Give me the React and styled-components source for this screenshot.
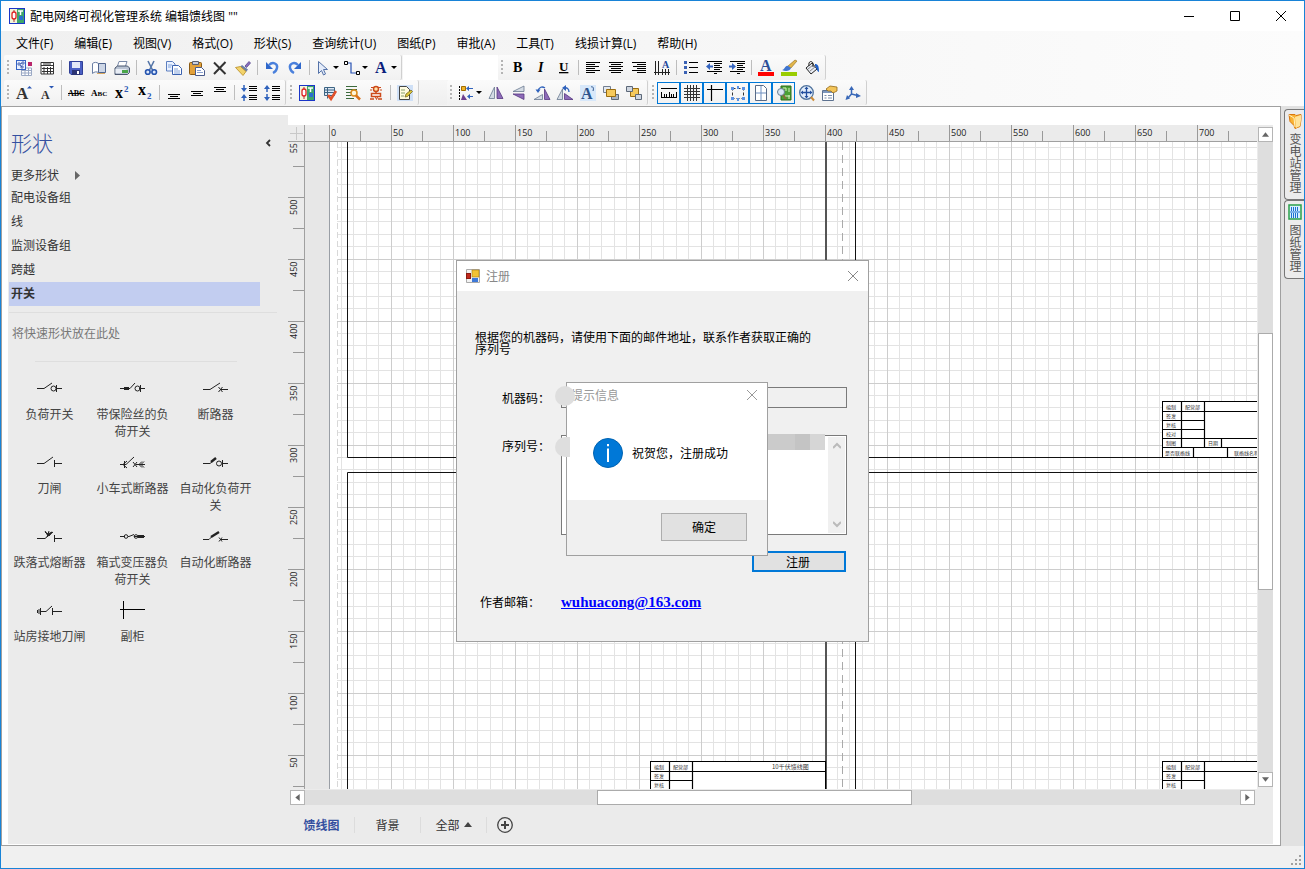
import { useState } from "react";
import styled, { createGlobalStyle } from "styled-components";

const menus = [
  "文件(F)",
  "编辑(E)",
  "视图(V)",
  "格式(O)",
  "形状(S)",
  "查询统计(U)",
  "图纸(P)",
  "审批(A)",
  "工具(T)",
  "线损计算(L)",
  "帮助(H)",
];

const groups = ["配电设备组", "线", "监测设备组", "跨越", "开关"];

// "|" is a separator, a trailing "+" adds the dropdown arrow
const standardBar = [
  "stencil", "table", "|", "save", "open", "print", "|",
  "cut", "copy", "paste", "remove", "brush", "|", "undo", "redo", "|",
  "pointer+", "connector+", "text+",
];
const formatBar = [
  "bold", "italic", "underline", "|",
  "alignLeft", "alignCenter", "alignRight", "textDown", "|",
  "bullets", "outdent", "indent", "|", "fontColor", "lineColor", "fill",
];
const textBar = [
  "grow", "shrink", "|", "strike", "smallCaps", "superscript", "subscript", "|",
  "bottom", "middle", "top", "|", "spaceLess", "spaceMore",
];
const reviewBar = ["diagram", "check", "find", "stamp", "|", "note"];
const arrangeBar = [
  "align+", "flipH", "flipV", "rotateLeft", "rotateRight", "rotateText", "front", "back",
];
const viewBar = [
  "ruler", "gridLines", "guides", "points", "pageBreaks", "overview", "pan", "props", "layout",
];
const activeTools = ["ruler", "gridLines", "guides", "points", "pageBreaks", "overview"];

// used by the icons table below, so it has to be defined first
const IconText = styled.text`
  font-family: "Liberation Serif", serif;
  font-size: ${(p) => p.$size}px;
  font-weight: ${(p) => (p.$bold ? 700 : 400)};
  font-style: ${(p) => (p.$italic ? "italic" : "normal")};
  text-decoration: ${(p) => (p.$underline ? "underline" : "none")};
  fill: ${(p) => p.fill || "#000"};
`;

const lines = (rows, color = "#000") =>
  rows.map(([x, y, w], i) => <rect key={i} x={x} y={y} width={w} height="1" fill={color} />);

const icons = {
  stencil: (
    <>
      <path d="M5.5 8h10v7.5h-10zM5.5 10.5h10M5.5 13h10M9 8v7.5M12.5 8v7.5" fill="#fff" stroke="#9aa8c4" />
      <rect x="0.5" y="0.5" width="9" height="9" fill="#eaf1ff" stroke="#3563c4" />
      <path d="M2 3h2v2H2zM6 2h2v2H6zM5 6h2v2H5zM4 4l2-1M4 5l2 2" fill="#fff" stroke="#2c4fa8" strokeWidth="0.8" />
      <rect x="12" y="2" width="4" height="4" fill="#b8256b" />
    </>
  ),
  table: (
    <>
      <path d="M2 2.5h12.5v11.5H2z" fill="#fff" stroke="#333" />
      <path d="M2 5.5h12.5M3 8.5h11M3 11.5h11M5 7v7M8.5 7v7M11.5 7v7" stroke="#333" />
      <path d="M4 4h8" stroke="#333" />
    </>
  ),
  save: (
    <>
      <path d="M1.5 1.5h13v13H3l-1.5-1.5z" fill="#4a5fc4" stroke="#2f3f96" />
      <path d="M4 2h8v6H4z" fill="#e3e8f7" />
      <path d="M4 10h8v5H4z" fill="#2a3272" />
      <path d="M9 11h2v3H9z" fill="#fff" />
    </>
  ),
  open: (
    <>
      <path d="M1.5 3.5c2-1.5 4-1.5 6 0v9c-2-1-4-1-6 1z" fill="#fff" stroke="#6b7fa5" />
      <path d="M7.5 3.5h7v9h-7z" fill="#cdd6e6" stroke="#50658f" />
      <path d="M6 13.5h8" stroke="#d8a860" />
    </>
  ),
  print: (
    <>
      <path d="M5 1.5h8l-2 6H3z" fill="#fff" stroke="#7a8aa8" />
      <path d="M1 8l2.5-2h10l2 2v4.5l-2 2H1z" fill="#b9c3d3" stroke="#49566e" />
      <path d="M1.5 9h11v4h-11z" fill="#e8edf5" />
      <path d="M8 10h6v3H8z" fill="#4aa64a" />
    </>
  ),
  cut: (
    <>
      <path d="M5 1l4.5 9M11 1L6.5 10" stroke="#5676a8" strokeWidth="1.6" fill="none" />
      <circle cx="4.8" cy="12" r="2.3" fill="#dce8fb" stroke="#2453ae" strokeWidth="1.6" />
      <circle cx="11.2" cy="12" r="2.3" fill="#dce8fb" stroke="#2453ae" strokeWidth="1.6" />
    </>
  ),
  copy: (
    <>
      <path d="M0.5 1.5h6l2.5 2.5v7H0.5z" fill="#e9f1ff" stroke="#5c7fc0" />
      <path d="M6.5 5.5h6l3 3v6h-9z" fill="#fff" stroke="#3b62b0" />
      <path d="M2 5h4M2 7h3M8 9h4M8 11h6M8 13h6" stroke="#83a4dc" />
    </>
  ),
  paste: (
    <>
      <rect x="0.5" y="2.5" width="12" height="12" rx="1" fill="#e3a13a" stroke="#8a5a14" />
      <path d="M3.5 1.5h6v3h-6z" fill="#c8cede" stroke="#5c6072" />
      <path d="M6.5 7.5h6l3 3v5h-9z" fill="#fff" stroke="#4a5b8c" />
      <path d="M8 10.5h4M8 12.5h6" stroke="#8aa0d0" />
    </>
  ),
  remove: <path d="M2 2.5L13.5 14M13.5 2L2 14" stroke="#333" strokeWidth="2" fill="none" />,
  brush: (
    <>
      <path d="M10 6L14 1.5l1.5 1.5-4 4.5z" fill="#8a6fc0" stroke="#55458a" strokeWidth="0.8" />
      <path d="M7 5l6 4.5-2 2.5-6-5z" fill="#6b7fa8" />
      <path d="M0.5 7.5l5-1 5.5 5L8 15.5z" fill="#f2d36b" stroke="#b88b22" strokeWidth="0.8" />
    </>
  ),
  undo: (
    <>
      <path d="M5 5c4-4 9-1 8 3-0.5 2.5-2 4-4 5" fill="none" stroke="#4a80dc" strokeWidth="2.4" />
      <path d="M2 2v7h7z" fill="#2f68cc" />
    </>
  ),
  redo: (
    <>
      <path d="M11 5C7 1 2 4 3 8c0.5 2.5 2 4 4 5" fill="none" stroke="#4a80dc" strokeWidth="2.4" />
      <path d="M14 2v7H7z" fill="#2f68cc" />
    </>
  ),
  pointer: <path d="M3.5 1.5v12l3-3 2 4.5 2-1-2-4.5h4z" fill="#e4ecfa" stroke="#5472a8" />,
  connector: (
    <>
      <path d="M2 3h5v10h6" fill="none" stroke="#2853b4" strokeWidth="1.2" />
      <path d="M0.5 1.5h3v3h-3zM12.5 11.5h3v3h-3z" fill="#fff" stroke="#000" />
    </>
  ),
  text: <IconText x="2" y="13" $size={16} $bold fill="#0b1e7c">A</IconText>,
  bold: <IconText x="3" y="12" $size={14} $bold>B</IconText>,
  italic: <IconText x="5" y="12" $size={14} $bold $italic>I</IconText>,
  underline: <IconText x="3" y="11" $size={13} $bold $underline>U</IconText>,
  alignLeft: lines([[1, 2, 14], [1, 4, 9], [1, 6, 13], [1, 8, 9], [1, 10, 14], [1, 12, 9]]),
  alignCenter: lines([[1, 2, 14], [3, 4, 10], [1, 6, 14], [3, 8, 10], [1, 10, 14], [3, 12, 10]]),
  alignRight: lines([[1, 2, 14], [6, 4, 9], [2, 6, 13], [6, 8, 9], [1, 10, 14], [6, 12, 9]]),
  textDown: (
    <>
      <path d="M1.5 1v14M4.5 1v14M8.5 9v6M11.5 9v6M14.5 9v6M0 12.5h16" stroke="#222" />
      <IconText x="8" y="8" $size={10} $bold fill="#24489c">A</IconText>
    </>
  ),
  bullets: (
    <>
      <path d="M1 1h3v3H1zM1 6h3v3H1zM1 11h3v3H1z" fill="#3a61b4" />
      {lines([[6, 2, 9], [6, 7, 9], [6, 12, 9]])}
    </>
  ),
  outdent: (
    <>
      {lines([[1, 1, 15], [8, 3, 8], [8, 5, 6], [8, 7, 8], [8, 9, 6], [1, 11, 15], [8, 13, 3]])}
      <path d="M0 6.5L4 3v2.5h3v2H4V10z" fill="#3565c0" />
    </>
  ),
  indent: (
    <>
      {lines([[1, 1, 15], [8, 3, 8], [8, 5, 6], [8, 7, 8], [8, 9, 6], [1, 11, 15], [8, 13, 3]])}
      <path d="M7 6.5L3 3v2.5H0v2h3V10z" fill="#3565c0" />
    </>
  ),
  fontColor: (
    <>
      <IconText x="2" y="11" $size={16} $bold fill="#2c4f98">A</IconText>
      <rect x="0" y="12" width="16" height="4" fill="#f00" />
    </>
  ),
  lineColor: (
    <>
      <path d="M7 6l7-6 2 1-6 7z" fill="#e2b64a" stroke="#8f6a1c" strokeWidth="0.6" />
      <path d="M1 10c3 0 3-5 6-4l3 2c-1 3-5 4-9 2z" fill="#3f75cf" />
      <rect x="0" y="12" width="16" height="4" fill="#9c0" />
    </>
  ),
  fill: (
    <>
      <path d="M2 8l6-5 5 6-6 5z" fill="#e8ecf4" stroke="#222" />
      <path d="M4 9l5-4M6 11l5-4" stroke="#888" />
      <path d="M5 6c-1-4 2-6 4-3v4" fill="none" stroke="#222" />
      <path d="M11 4c3 0 4 2 4 8-2 0-2-4-4-6z" fill="#1f5fc8" />
    </>
  ),
  grow: (
    <>
      <IconText x="0" y="14" $size={17} $bold fill="#333">A</IconText>
      <path d="M11 3.5h5L13.5 1z" fill="#2a57b4" />
    </>
  ),
  shrink: (
    <>
      <IconText x="2" y="14" $size={12} $bold fill="#333">A</IconText>
      <path d="M10 1h5l-2.5 2.5z" fill="#2a57b4" />
    </>
  ),
  strike: (
    <>
      <IconText x="0" y="11" $size={8} $bold>ABC</IconText>
      <path d="M0 8.5h16" stroke="#000" />
    </>
  ),
  smallCaps: <IconText x="0" y="11" $size={9} $bold>A<tspan fontSize="7">BC</tspan></IconText>,
  superscript: (
    <>
      <IconText x="1" y="13" $size={16} $bold>x</IconText>
      <IconText x="10" y="7" $size={9} $bold fill="#2a57b4">2</IconText>
    </>
  ),
  subscript: (
    <>
      <IconText x="1" y="10" $size={16} $bold>x</IconText>
      <IconText x="10" y="14" $size={9} $bold fill="#2a57b4">2</IconText>
    </>
  ),
  bottom: lines([[2, 9, 12], [4, 11, 8], [2, 13, 12]]),
  middle: lines([[2, 6, 12], [4, 8, 8], [2, 10, 12]]),
  top: lines([[2, 2, 12], [4, 4, 8], [2, 6, 12]]),
  spaceLess: (
    <>
      {lines([[8, 1, 8], [8, 3, 8], [8, 5, 8], [8, 10, 8], [8, 12, 8], [8, 14, 8]])}
      <path d="M3 0v4M3 16v-4" stroke="#2f62bc" strokeWidth="1.5" />
      <path d="M0 3h6L3 7zM0 13h6L3 9z" fill="#2f62bc" />
    </>
  ),
  spaceMore: (
    <>
      {lines([[8, 1, 8], [8, 3, 8], [8, 5, 8], [8, 10, 8], [8, 12, 8], [8, 14, 8]])}
      <path d="M3 3v4M3 13V9" stroke="#2f62bc" strokeWidth="1.5" />
      <path d="M0 4h6L3 0zM0 12h6l-3 4z" fill="#2f62bc" />
    </>
  ),
  diagram: <DiagramArt />,
  check: (
    <>
      <path d="M2.5 2.5h10v8h-10zM2.5 5h10M2.5 7.5h10M5.5 2.5v11" fill="#dfe8f4" stroke="#3d6584" />
      <path d="M6 10l3 4 5-8" fill="none" stroke="#e2512b" strokeWidth="2.5" />
    </>
  ),
  find: (
    <>
      {lines([[1, 1, 11], [1, 4, 11], [1, 7, 5], [1, 10, 5], [1, 13, 8]], "#3d6a3d")}
      <circle cx="9" cy="8" r="3" fill="#fff5d8" stroke="#d98a1a" strokeWidth="1.5" />
      <path d="M11 10.5l4 4" stroke="#d9701a" strokeWidth="2.5" />
    </>
  ),
  stamp: (
    <>
      <circle cx="8" cy="4" r="2.5" fill="#ffe3a8" stroke="#cc4a1b" strokeWidth="1.5" />
      <path d="M8 6.5v2M3.5 8.5h9v3h-9zM2 14h4M10 14h4" fill="#fff" stroke="#cc4a1b" strokeWidth="1.5" />
      <path d="M7 11l1.5 3.5L10 11M2 5h2M12 5h2" stroke="#cc4a1b" fill="none" />
      <path d="M3 2.5h3M10 2.500h3" stroke="#cc4a1b" />
    </>
  ),
  note: (
    <>
      <rect x="0" y="0" width="16" height="16" fill="#cfe0f6" />
      <path d="M2.5 1.5h7l3 3v10h-10z" fill="#fffbe0" stroke="#454545" />
      <path d="M4 5h4M4 8h4M4 11h3" stroke="#88a070" />
      <path d="M8 12l1-3 5-4 1.5 1.5-5 5z" fill="#d9c43a" stroke="#6a5a1a" strokeWidth="0.7" />
    </>
  ),
  align: (
    <>
      <path d="M1.5 1v14" stroke="#000" strokeDasharray="2 1" />
      <path d="M3.5 1.5h4v4h-4z" fill="#f0b429" stroke="#a06c00" />
      <path d="M3 15l2-6 4 6z" fill="#6c3f8e" />
      <path d="M10 3.5h5M11 11.5h4" stroke="#2f62bc" />
      <path d="M8 3.5l3-2.5v5zM9 11.5l3-2.5v5z" fill="#2f62bc" />
    </>
  ),
  flipH: (
    <>
      <path d="M6.5 2v11.5H1z" fill="#d4dbe4" stroke="#6a7a90" strokeWidth="0.8" />
      <path d="M9 2v11.5h6z" fill="#8d6bb8" stroke="#563680" strokeWidth="0.8" />
    </>
  ),
  flipV: (
    <>
      <path d="M13 1v5.5H2z" fill="#d4dbe4" stroke="#6a7a90" strokeWidth="0.8" />
      <path d="M13 14.5V9H2z" fill="#8d6bb8" stroke="#563680" strokeWidth="0.8" />
    </>
  ),
  rotateLeft: (
    <>
      <path d="M0 14.5h8.5V9.5z" fill="#d4dbe4" stroke="#6a7a90" strokeWidth="0.8" />
      <path d="M10.5 4v10.5H16z" fill="#8d6bb8" stroke="#563680" strokeWidth="0.8" />
      <path d="M4 6c1-4 4-5 7-3" fill="none" stroke="#2f62bc" strokeWidth="1.3" />
      <path d="M1.5 4.5h5L4 8z" fill="#2f62bc" />
    </>
  ),
  rotateRight: (
    <>
      <path d="M5.5 4v10.5H0z" fill="#d4dbe4" stroke="#6a7a90" strokeWidth="0.8" />
      <path d="M16 14.5H7.5v-6z" fill="#8d6bb8" stroke="#563680" strokeWidth="0.8" />
      <path d="M12 7c0-3-2-5-5-4" fill="none" stroke="#2f62bc" strokeWidth="1.3" />
      <path d="M9 0v6L5 3z" fill="#2f62bc" />
    </>
  ),
  rotateText: (
    <>
      <rect width="16" height="16" fill="#d8e8fa" />
      <IconText x="1" y="14" $size={16} $bold fill="#2d548c">A</IconText>
      <path d="M11 2c2-1 3 1 2 4" fill="none" stroke="#2d548c" />
    </>
  ),
  front: (
    <>
      <path d="M0.5 1.5h7v6h-7z" fill="#e4e9f0" stroke="#737f90" />
      <path d="M8.5 9.5h7v5h-7z" fill="#aab4c4" stroke="#5c6878" />
      <path d="M3.5 4.5h9v7h-9z" fill="#f5c95c" stroke="#9a6d10" />
    </>
  ),
  back: (
    <>
      <path d="M4.5 3.5h8v8h-8z" fill="#f5c95c" stroke="#9a6d10" />
      <path d="M0.5 1.5h6v5h-6zM9.5 9.5h6v5h-6z" fill="#cfd6e0" stroke="#5c6878" />
    </>
  ),
  ruler: (
    <>
      <path d="M0 3.5h16" stroke="#000" />
      <path d="M0 12.5h16M0.5 7v5M3.5 9v3M5.5 9v3M8.5 7v5M10.5 9v3M12.5 9v3M15.5 7v5" stroke="#000" />
    </>
  ),
  gridLines: <path d="M3.5 0v16M6.5 0v16M9.5 0v16M12.5 0v16M0 3.5h16M0 6.5h16M0 9.5h16M0 12.5h16" stroke="#333" />,
  guides: <path d="M0 4.5h16M4.5 0v16" stroke="#000" strokeWidth="1.2" />,
  points: (
    <>
      <path d="M2.5 3.5h11v10h-11z" fill="none" stroke="#333" strokeDasharray="3 2" />
      <path d="M1 2h3v3H1zM12 2h3v3h-3zM1 12h3v3H1zM12 12h3v3h-3zM7 1h2v3H7zM7 13h2v3H7z" fill="#5b92e4" />
    </>
  ),
  pageBreaks: (
    <>
      <path d="M2.5 0.5h8l3 3v12h-11z" fill="#fff" stroke="#586a86" />
      <path d="M8 1v14M3 8h10" stroke="#6f8fc0" />
    </>
  ),
  overview: (
    <>
      <path d="M5 1h10v14H5z" fill="#4aa034" stroke="#2b6a1d" />
      <path d="M7 3h3v3M13 3v4M9 11h5M13 10v4" stroke="#d6f0c0" fill="none" />
      <circle cx="5" cy="7" r="3.5" fill="#d9e7f4" stroke="#687e94" />
      <path d="M7 10l3 4" stroke="#8a6a3a" strokeWidth="2" />
    </>
  ),
  pan: (
    <>
      <circle cx="7.5" cy="7.5" r="6.8" fill="#e3eefb" stroke="#51749e" strokeWidth="1.3" />
      <path d="M7.5 3v9M3 7.5h9" stroke="#234f9e" strokeWidth="1.3" />
      <path d="M7.5 1.5l2 2.5h-4zM7.5 13.5l2-2.5h-4zM1.5 7.5l2.5-2v4zM13.5 7.5L11 5.5v4z" fill="#234f9e" />
      <path d="M12 12l3 3.5" stroke="#cc8a36" strokeWidth="2" />
    </>
  ),
  props: (
    <>
      <path d="M0.5 5.5h11v10H0.5z" fill="#fff" stroke="#5d7290" />
      <path d="M1 6h10v2H1z" fill="#7d97bd" />
      <path d="M2.5 10.5h2M6 10.5h4M2.5 13h2M6 13h4" stroke="#7a8ca8" />
      <path d="M4 4l4-3 7 1v4l-4 2-2-2H6z" fill="#f3c55a" stroke="#94691a" strokeWidth="0.8" />
    </>
  ),
  layout: (
    <>
      <path d="M6.5 9V3M6.5 9L3 13M6.5 9l6 1.5" stroke="#3968b8" strokeWidth="1.5" fill="none" />
      <path d="M4 5l2.5-4L9 5zM2 10l3 3.5-4.5 1.5zM11 8l5 3-5 2z" fill="#3968b8" />
    </>
  ),
};

// thumbnails of the electrical symbols
const shapes = [
  { name: "负荷开关", art: <><path d="M0 10.5h7L15 5M19.5 7v7M19 10.5h6" /><circle cx="16.5" cy="10.5" r="2.5" /></> },
  { name: "带保险丝的负荷开关", art: <><path d="M0 10.5h10L15 5M20.5 7v7M19 10.5h6" /><rect x="4.5" y="9.5" width="4" height="2" fill="#222" /><circle cx="17.5" cy="10.5" r="2.5" /></> },
  { name: "断路器", art: <path d="M0 11.5h7L17 5M15.500 9l4 5M19.500 9l-4 5M18 11.5h7" /> },
  { name: "刀闸", art: <path d="M0 11.5h7L16 5M17.5 8v7M17 11.5h8" /> },
  { name: "小车式断路器", art: <path d="M0 12.5h6L14 5M7 9l-4 3.500 4 3.500M4.500 9v7M13 10l4 5M17 10l-4 5M16 12.5h9M22 9.500l-3 3 3 3M24 9.500l-3 3 3 3" /> },
  { name: "自动化负荷开关", art: <><path d="M0 11.5h7L10 9M19.5 8v7M19 11.5h6" /><path d="M8 10l5-4" strokeWidth="2.4" /><circle cx="16" cy="11.5" r="2.500" /></> },
  { name: "跌落式熔断器", art: <><path d="M0 12.5h8L16 6M17.5 9v7M17 12.5h8M8 5l3 5M12 5l-2 6" /><path d="M8 6l3 2 4-2-3 4z" fill="#222" /></> },
  { name: "箱式变压器负荷开关", art: <><path d="M0 10.5h5M8 10.5h1l5-2M14 10.5h11" /><circle cx="6" cy="10.5" r="1.8" /><circle cx="16" cy="10.5" r="1.8" /><rect x="18.5" y="9.500" width="5" height="2" fill="#222" /></> },
  { name: "自动化断路器", art: <><path d="M0 13.5h6l3-3M16 11.500l3 4M19 11.500l-3 4M17 13.5h8" /><path d="M8 11l8-5" strokeWidth="2.4" /></> },
  { name: "站房接地刀闸", art: <><path d="M3 11.5h6L15 6M15.5 8v7M15 11.5h10" /><path d="M0.5 10v3M2 9v5M3.5 8v7" /></> },
  { name: "副柜", art: <path d="M3.500 1v18M0 9.500h25" stroke="#000" /> },
];

function DiagramArt() {
  return (
    <>
      <rect x="0.5" y="0.5" width="15" height="15" fill="#3fa66a" stroke="#1a35c8" />
      <path d="M1 1h7v14H1z" fill="#f3f6da" />
      <path d="M5 2v12" stroke="#a33" />
      <rect x="3" y="4" width="4" height="7" rx="2" fill="#fff" stroke="#d22" strokeWidth="1.3" />
      <path d="M9 3h5M11.5 3v4" stroke="#fff" strokeWidth="1.5" />
      <path d="M10 8h4v4h-4z" fill="#2b6fd0" />
    </>
  );
}

function Toolbar({ items }) {
  return (
    <Strip>
      <Grip />
      {items.map((item, index) => {
        if (item === "|") return <Separator key={index} />;
        const name = item.replace("+", "");
        const hasMenu = item.endsWith("+");
        return (
          <ToolButton
            key={index}
            type="button"
            aria-label={name}
            $wide={hasMenu}
            $active={activeTools.includes(name)}
          >
            <svg width="16" height="16" viewBox="0 0 16 16" fill="none">
              {icons[name]}
            </svg>
            {hasMenu && <Caret />}
          </ToolButton>
        );
      })}
    </Strip>
  );
}

const STEP = 62;
const minor = [12, 24, 37, 49];

function HorizontalRuler() {
  const ticks = Array.from({ length: 15 }, (_, i) => i);
  return (
    <RulerSvg height="17">
      {ticks.map((i) => (
        <g key={i}>
          <path d={`M${24.5 + i * STEP} 0v17M${55.5 + i * STEP} 6v11`} stroke="#999" />
          <text x={26 + i * STEP} y="11">{i * 50}</text>
        </g>
      ))}
      <path d="M0 16.5h4000" stroke="#a0a0a0" />
    </RulerSvg>
  );
}

function VerticalRuler() {
  const ticks = Array.from({ length: 11 }, (_, i) => i);
  return (
    <RulerSvg width="17">
      {ticks.map((i) => {
        const y = i * STEP - 6.5;
        return (
          <g key={i}>
            <path d={`M0 ${y}h17M5 ${y + 31}h12`} stroke="#999" />
            <text x={i === 0 ? 0 : -2} textAnchor="end" transform={`translate(9 ${i === 0 ? 1 : y}) rotate(-90)`}>
              {i === 0 ? "55" : 550 - i * 50}
            </text>
          </g>
        );
      })}
      <path d="M16.5 0v2000" stroke="#a0a0a0" />
    </RulerSvg>
  );
}

const blockLabels = ["编制", "签发", "复核", "校对", "制图"];

function TitleBlock({ x, y, width, title, rows = 5 }) {
  return (
    <g transform={`translate(${x} ${y})`}>
      <rect x="0.5" y="0.5" width={width} height="56" fill="#fff" stroke="#000" />
      <path
        d={`M0 10.5h${width}M0 19.5h42M0 28.5h42M0 37.5h${width}M0 46.5h${width}M19.5 0v46M42.5 0v46M59.5 37v9M31.5 46v10M65.5 46v10`}
        stroke="#000"
        strokeWidth="1.2"
      />
      {blockLabels.slice(0, rows).map((label, i) => (
        <BlockText key={label} x="4" y={8 + i * 9}>{label}</BlockText>
      ))}
      <BlockText x="23" y="8">配营部</BlockText>
      {title && <BlockText x="122" y="8" $large>{title}</BlockText>}
      {rows === 5 && (
        <>
          <BlockText x="46" y="44">日期</BlockText>
          <BlockText x="3" y="54">是否联络线</BlockText>
          <BlockText x="72" y="54">联络线名称</BlockText>
        </>
      )}
    </g>
  );
}

function Drawing() {
  const cells = Array.from({ length: 24 }, (_, i) => i);
  return (
    <Paper>
      <rect x="25" width="4000" height="2000" fill="#fff" />
      {cells.map((i) => (
        <g key={i}>
          {minor.map((d) => (
            <g key={d} stroke="#e3e3e3">
              <path d={`M${24.5 + i * STEP + d} 0v2000`} />
              <path d={`M32 ${i * STEP - 6.5 + d}h4000`} />
            </g>
          ))}
        </g>
      ))}
      {cells.map((i) => (
        <g key={i} stroke="#cdcdcd">
          {i > 0 && <path d={`M${24.5 + i * STEP} 0v2000`} />}
          <path d={`M32 ${i * STEP - 6.5}h4000`} />
        </g>
      ))}
      <path d="M24.5 0v2000" stroke="#9a9fa6" />
      <path d="M32.5 0v2000M32 315.5h4000" stroke="#d8d8d8" strokeDasharray="6 3" />
      <path d="M537.5 0v2000" stroke="#aaa" strokeDasharray="8 5" />
      <path d="M42.5 0v315.5h478.5V0M42.5 2000V330.5h478.5V2000" stroke="#111" fill="none" />
      <path d="M521 0v315M521 331v1700" stroke="#555" strokeWidth="2" />
      <path d="M550.5 0v315.5h4000M550.5 2000V330.5h4000" stroke="#111" fill="none" />
      <TitleBlock x={857} y={259} width={400} />
      <TitleBlock x={857} y={619} width={400} rows={3} />
      <TitleBlock x={345} y={619} width={175} rows={3} title="10千伏馈线图" />
    </Paper>
  );
}

function CloseIcon({ size = 10 }) {
  return (
    <svg width={size} height={size} viewBox="0 0 10 10">
      <path d="M0 0l10 10M10 0L0 10" stroke="currentColor" strokeWidth="1" />
    </svg>
  );
}

function RegisterDialog() {
  return (
    <Dialog role="dialog" aria-label="注册">
      <DialogTitle>
        <svg width="14" height="14" viewBox="0 0 14 14">
          <path d="M0.5 0.5h13v13H0.5z" fill="#f2f2f2" stroke="#aaa" />
          <rect x="0.5" y="4.5" width="4" height="5" fill="#c0281c" stroke="#8a1a10" />
          <rect x="6" y="1" width="7" height="7" fill="#f3c234" stroke="#a87a10" strokeWidth="0.6" />
          <rect x="6" y="9" width="6" height="4" fill="#3e79d8" />
        </svg>
        <span>注册</span>
        <PlainButton type="button" aria-label="close"><CloseIcon /></PlainButton>
      </DialogTitle>
      <Form onSubmit={(e) => e.preventDefault()}>
        <Hint>根据您的机器码，请使用下面的邮件地址，联系作者获取正确的序列号</Hint>
        <label htmlFor="machine">机器码：</label>
        <MachineInput id="machine" readOnly />
        <label htmlFor="serial">序列号：</label>
        <SerialBox>
          <textarea id="serial" />
          <SerialScroll>
            <Chevron viewBox="0 0 8 8"><path d="M0 6l4-4 4 4" /></Chevron>
            <Chevron viewBox="0 0 8 8"><path d="M0 2l4 4 4-4" /></Chevron>
          </SerialScroll>
        </SerialBox>
        <RegisterButton type="submit">注册</RegisterButton>
        <MailLabel>作者邮箱：</MailLabel>
        <Mail href="mailto:wuhuacong@163.com">wuhuacong@163.com</Mail>
      </Form>
      <Mosaic>
        <i />
        <i />
        <i />
        <i />
      </Mosaic>
    </Dialog>
  );
}

function MessageBox({ onClose }) {
  return (
    <Message role="alertdialog" aria-label="提示信息">
      <MessageTitle>
        <span>提示信息</span>
        <PlainButton type="button" aria-label="close" onClick={onClose}><CloseIcon /></PlainButton>
      </MessageTitle>
      <MessageBody>
        <svg width="30" height="30" viewBox="0 0 30 30">
          <circle cx="15" cy="15" r="14.5" fill="#0078d7" stroke="#0063b1" />
          <path d="M15 6v2.2M15 10.5v13.5" stroke="#fff" strokeWidth="2" />
        </svg>
        <span>祝贺您，注册成功</span>
      </MessageBody>
      <MessageFooter>
        <OkButton type="button" onClick={onClose}>确定</OkButton>
      </MessageFooter>
    </Message>
  );
}

function App() {
  const [group, setGroup] = useState("开关");
  const [messageOpen, setMessageOpen] = useState(true);

  return (
    <>
      <GlobalStyle />
      <Window>
        <TitleBar>
          <svg width="16" height="16" viewBox="0 0 16 16"><DiagramArt /></svg>
          <h1>配电网络可视化管理系统 编辑馈线图 ""</h1>
          <WindowButton type="button" aria-label="minimize">
            <svg width="10" height="10"><path d="M0 5.5h10" stroke="#000" /></svg>
          </WindowButton>
          <WindowButton type="button" aria-label="maximize">
            <svg width="10" height="10"><path d="M0.5 0.5h9v9h-9z" stroke="#000" fill="none" /></svg>
          </WindowButton>
          <WindowButton type="button" aria-label="close"><CloseIcon /></WindowButton>
        </TitleBar>

        <Chrome>
          <MenuBar>
            {menus.map((menu) => (
              <MenuItem key={menu} type="button">{menu}</MenuItem>
            ))}
          </MenuBar>
          <ToolRow>
            <Toolbar items={standardBar} />
            <BlankBar $width={95} />
            <Toolbar items={formatBar} />
          </ToolRow>
          <ToolRow>
            <Toolbar items={textBar} />
            <Toolbar items={reviewBar} />
            <BlankBar $width={27} $faded />
            <Toolbar items={arrangeBar} />
            <Toolbar items={viewBar} />
          </ToolRow>
        </Chrome>

        <Work>
          <Main>
            <ShapesPanel>
              <PanelHead>
                <h2>形状</h2>
                <PlainButton type="button" aria-label="collapse">
                  <svg width="6" height="8" viewBox="0 0 6 8">
                    <path d="M5 1L2 4l3 3" fill="none" stroke="#333" strokeWidth="1.8" />
                  </svg>
                </PlainButton>
              </PanelHead>
              <MoreShapes type="button">
                更多形状
                <svg width="5" height="9"><path d="M0 0l5 4.5L0 9z" fill="#666" /></svg>
              </MoreShapes>
              {groups.map((name) => (
                <GroupItem
                  key={name}
                  type="button"
                  $selected={name === group}
                  onClick={() => setGroup(name)}
                >
                  {name}
                </GroupItem>
              ))}
              <Divider />
              <QuickHint>将快速形状放在此处</QuickHint>
              <Divider $inset />
              <ShapeGrid>
                {shapes.map((shape) => (
                  <ShapeCell key={shape.name}>
                    <svg width="26" height="20" viewBox="0 0 26 20" fill="none" stroke="#222">
                      {shape.art}
                    </svg>
                    <span>{shape.name}</span>
                  </ShapeCell>
                ))}
              </ShapeGrid>
            </ShapesPanel>

            <Editor>
              <Corner width="17" height="17">
                <path d="M2 8.5h13M8.5 2v13" stroke="#c8c8c8" />
                <path d="M0 16.5h17M16.5 0v17" stroke="#a0a0a0" />
              </Corner>
              <HorizontalRuler />
              <VerticalRuler />
              <Drawing />
              <VerticalBar>
                <ScrollButton type="button" aria-label="up"><Triangle viewBox="0 0 8 5"><path d="M0 5l4-5 4 5z" /></Triangle></ScrollButton>
                <Space $grow={192} />
                <Thumb $grow={255} />
                <Space $grow={183} />
                <ScrollButton type="button" aria-label="down"><Triangle viewBox="0 0 8 5"><path d="M0 0l4 5 4-5z" /></Triangle></ScrollButton>
              </VerticalBar>
              <HorizontalBar>
                <ScrollButton type="button" aria-label="left"><Triangle $side viewBox="0 0 5 8"><path d="M5 0L0 4l5 4z" /></Triangle></ScrollButton>
                <Space $grow={293} />
                <Thumb $grow={314} />
                <Space $grow={329} />
                <ScrollButton type="button" aria-label="right"><Triangle $side viewBox="0 0 5 8"><path d="M0 0l5 4-5 4z" /></Triangle></ScrollButton>
              </HorizontalBar>
              <SheetTabs>
                <SheetTab type="button" $current>馈线图</SheetTab>
                <SheetTab type="button">背景</SheetTab>
                <SheetTab type="button">
                  全部
                  <svg width="8" height="5"><path d="M0 5l4-5 4 5z" fill="#444" /></svg>
                </SheetTab>
                <AddSheet type="button" aria-label="add">
                  <svg width="16" height="16" viewBox="0 0 16 16" fill="none" stroke="#444">
                    <circle cx="8" cy="8" r="7.3" strokeWidth="1.3" />
                    <path d="M8 4v8M4 8h8" strokeWidth="2" />
                  </svg>
                </AddSheet>
              </SheetTabs>
            </Editor>
          </Main>
          <SideTabs>
            <SideTab type="button">
              <svg width="14" height="16" viewBox="0 0 14 16">
                <path d="M1 1.5h6l1 1 5-1v5l-1 7-5 2-1-3-4-4z" fill="#f9b233" stroke="#d9770d" />
                <path d="M7 4l6-2v5l-1 6-4 2z" fill="#ffe39a" />
                <path d="M1 2l5 3 1 9" fill="none" stroke="#fff0c0" />
              </svg>
              变电站管理
            </SideTab>
            <SideTab type="button">
              <svg width="14" height="16" viewBox="0 0 14 16">
                <path d="M1 1h12v14H1z" fill="#d6f0ff" stroke="#2aa04a" strokeWidth="1.5" />
                <path d="M3.5 3v4M5.5 3v4M7.5 3v4M9.5 3v4M3.5 9v5M5.5 9v5M7.5 9v5M9.5 9v5M2 8h10" stroke="#1d6fd0" />
              </svg>
              图纸管理
            </SideTab>
          </SideTabs>
        </Work>

        <StatusBar>
          <svg width="11" height="11">
            <path d="M9 0h2v2H9zM5 4h2v2H5zM9 4h2v2H9zM1 8h2v2H1zM5 8h2v2H5zM9 8h2v2H9z" fill="#a0a0a0" />
          </svg>
        </StatusBar>

        <RegisterDialog />
        {messageOpen && <MessageBox onClose={() => setMessageOpen(false)} />}
        <Smudge $top={386} $size={20} />
        <Smudge $top={437} $size={20} $cut />
      </Window>
    </>
  );
}

export default App;

const GlobalStyle = createGlobalStyle`
  * {
    box-sizing: border-box;
  }

  body {
    margin: 0;
    font-family: "Open Sans", "Noto Sans CJK SC", sans-serif;
    font-size: 12px;
    color: #000;
  }

  button, input, textarea {
    font: inherit;
    color: inherit;
    margin: 0;
    padding: 0;
    border: 0;
    border-radius: 0;
    background: none;
  }

  svg {
    display: block;
    flex: none;
  }
`;

const Window = styled.div`
  position: relative;
  display: flex;
  flex-direction: column;
  height: 100vh;
  overflow: hidden;
  border: 1px solid #1883d7;
  background: #f0f0f0;
`;

const TitleBar = styled.header`
  display: flex;
  align-items: center;
  height: 30px;
  padding-left: 8px;
  background: #fff;

  h1 {
    flex: 1;
    margin: 0 0 0 5px;
    font-size: 12px;
    font-weight: 400;
  }
`;

const WindowButton = styled.button`
  display: flex;
  align-items: center;
  justify-content: center;
  width: 46px;
  height: 28px;
`;

const Chrome = styled.div`
  height: 75px;
  background: linear-gradient(to right, #f0f0f0, #fcfcfc);
`;

const MenuBar = styled.nav`
  display: flex;
  gap: 1px;
  height: 24px;
  padding-left: 5px;
`;

const MenuItem = styled.button`
  padding: 0 10px;
  line-height: 26px;
  white-space: nowrap;
`;

const ToolRow = styled.div`
  display: flex;
  gap: 1px;
  height: 25px;
  padding-left: 3px;
`;

const Strip = styled.div`
  display: flex;
  align-items: center;
  height: 25px;
  padding-right: 2px;
  border-right: 1px solid #d0d0d0;
  border-radius: 2px;
  background: linear-gradient(#fbfbfb, #f1f1f1);
`;

const BlankBar = styled.div`
  width: ${(p) => p.$width}px;
  height: 25px;
  margin-right: -1px;
  background: ${(p) => (p.$faded ? "linear-gradient(#f7f7f7, #efefef)" : "#fff")};
`;

const Grip = styled.span`
  width: 2px;
  height: 16px;
  margin: 0 3px;
  background: repeating-linear-gradient(#b4b4b4 0 2px, transparent 2px 4px);
`;

const Separator = styled.span`
  width: 1px;
  height: 15px;
  margin: 0 2px 0 3px;
  background: #bdbdbd;
`;

const ToolButton = styled.button`
  display: flex;
  align-items: center;
  justify-content: center;
  gap: 2px;
  width: ${(p) => (p.$wide ? 29 : 23)}px;
  height: 22px;
  border: ${(p) => (p.$active ? "1px solid #0078d7" : "0")};

  svg {
    overflow: visible;
  }
`;

const Caret = styled.span`
  border: 3px solid transparent;
  border-top-color: #000;
  border-bottom: 0;
`;

const Work = styled.div`
  flex: 1;
  display: flex;
  min-height: 0;
`;

const Main = styled.main`
  flex: 1;
  display: flex;
  min-width: 0;
  padding: 8px 7px 1px 6px;
  border: 1px solid #a0a0a0;
  background: #fff;
`;

const ShapesPanel = styled.aside`
  flex: none;
  width: 280px;
  padding: 14px 0 0 1px;
  background: #ebebeb;
  color: #333;
`;

const PanelHead = styled.div`
  display: flex;
  justify-content: space-between;
  height: 28px;
  margin-bottom: 7px;
  padding: 0 17px 0 2px;

  h2 {
    margin: 0;
    font-size: 21px;
    font-weight: 300;
    line-height: 28px;
    color: #3450a0;
  }
`;

const PlainButton = styled.button`
  display: flex;
  align-items: center;
  justify-content: center;
`;

const MoreShapes = styled.button`
  display: flex;
  align-items: center;
  gap: 16px;
  height: 22px;
  padding-left: 2px;
`;

const GroupItem = styled.button`
  display: block;
  width: 251px;
  height: 24px;
  padding-left: 2px;
  text-align: left;
  line-height: 24px;
  font-weight: ${(p) => (p.$selected ? 700 : 400)};
  background: ${(p) => (p.$selected ? "#c2cdf0" : "transparent")};
`;

const Divider = styled.hr`
  height: 1px;
  margin: ${(p) => (p.$inset ? "15px 51px 16px 26px" : "6px 11px 9px 0")};
  border: 0;
  background: #dedede;
`;

const QuickHint = styled.p`
  margin: 0;
  padding-left: 3px;
  line-height: 24px;
  color: #777;
`;

const ShapeGrid = styled.div`
  display: grid;
  grid-template-columns: repeat(3, 83px);
  grid-auto-rows: 74px;
`;

const ShapeCell = styled.div`
  display: flex;
  flex-direction: column;
  align-items: center;
  gap: 8px;
  padding: 0 6px 0 4px;
  text-align: center;
  line-height: 17px;
  color: #444;
`;

const Editor = styled.section`
  flex: 1;
  display: grid;
  grid-template-columns: 17px 1fr 16px;
  grid-template-rows: 17px 1fr 16px 39px;
  min-width: 0;
  margin-top: 10px;
  background: #ebebeb;
`;

const Corner = styled.svg`
  grid-area: 1 / 1;
`;

const RulerSvg = styled.svg`
  width: ${(p) => (p.width ? `${p.width}px` : "100%")};
  height: ${(p) => (p.height ? `${p.height}px` : "100%")};
  grid-area: ${(p) => (p.width ? "2 / 1" : "1 / 2")};
  min-height: 0;
  overflow: hidden;
  font-size: 9px;
  fill: #222;
`;

const Paper = styled.svg`
  grid-area: 2 / 2;
  width: 100%;
  height: 100%;
  min-height: 0;
  overflow: hidden;
  background: #e7e7e7;
`;

const BlockText = styled.text`
  font-family: "Noto Sans CJK SC", sans-serif;
  font-size: ${(p) => (p.$large ? 6 : 5)}px;
  fill: #333;
`;

const VerticalBar = styled.div`
  grid-area: 1 / 3 / 3 / 4;
  display: flex;
  flex-direction: column;
  width: 15px;
  margin: 2px 0 2px 1px;
  background: #dedede;
`;

const HorizontalBar = styled.div`
  grid-area: 3 / 1 / 4 / 3;
  display: flex;
  height: 15px;
  margin: 1px 2px 0 2px;
  background: #dedede;
`;

const ScrollButton = styled.button`
  flex: none;
  display: flex;
  align-items: center;
  justify-content: center;
  width: 15px;
  height: 15px;
  border: 1px solid #b5b5b5;
  background: #fff;
`;

const Triangle = styled.svg`
  width: ${(p) => (p.$side ? 5 : 7)}px;
  height: ${(p) => (p.$side ? 7 : 5)}px;
  fill: #666;
`;

const Space = styled.div`
  flex: ${(p) => p.$grow} 1 0;
`;

const Thumb = styled.div`
  flex: ${(p) => p.$grow} 1 0;
  border: 1px solid #ababab;
  background: #fff;
`;

const SheetTabs = styled.div`
  grid-area: 4 / 1 / 5 / 4;
  display: flex;
  align-items: center;
  padding-left: 1px;
`;

const SheetTab = styled.button`
  display: flex;
  align-items: center;
  justify-content: center;
  gap: 4px;
  width: 66px;
  height: 16px;
  border-right: 1px solid #dcdcdc;
  font-weight: ${(p) => (p.$current ? 700 : 400)};
  color: ${(p) => (p.$current ? "#3450a0" : "#333")};
`;

const AddSheet = styled.button`
  margin-left: 10px;
`;

const SideTabs = styled.div`
  display: flex;
  flex-direction: column;
  width: 23px;
  padding: 3px 0 0 3px;
  background: #e1e1e1;
`;

const SideTab = styled.button`
  display: flex;
  align-items: center;
  gap: 4px;
  padding: 3px 0 6px;
  writing-mode: vertical-rl;
  border: 1px solid #777;
  border-right: 0;
  border-radius: 4px 0 0 4px;
  background: #ececec;
  color: #555;
`;

const StatusBar = styled.footer`
  display: flex;
  align-items: flex-end;
  justify-content: flex-end;
  height: 22px;
  padding: 0 3px 2px 0;
  background: #f0f0f0;
`;

const Dialog = styled.section`
  position: absolute;
  top: 259px;
  left: 455px;
  width: 413px;
  height: 382px;
  border: 1px solid #a0a0a0;
  background: #f0f0f0;
`;

const DialogTitle = styled.header`
  display: flex;
  align-items: center;
  gap: 6px;
  height: 30px;
  padding: 0 10px 0 9px;
  background: #fff;
  color: #888;

  span {
    flex: 1;
  }
`;

const Form = styled.form`
  display: grid;
  grid-template-columns: 86px 1fr;
  align-items: start;
  padding: 40px 21px 0 18px;
  font-family: "Noto Sans CJK SC", sans-serif;

  label {
    padding-left: 27px;
    line-height: 22px;
  }
`;

const Hint = styled.p`
  grid-column: 1 / 3;
  width: 340px;
  margin: 0 0 32px;
  line-height: 12px;
`;

const MachineInput = styled.input`
  height: 21px;
  margin-bottom: 27px;
  border: 1px solid #7a7a7a;
  background: #f0f0f0;
`;

const SerialBox = styled.div`
  display: flex;
  height: 100px;
  padding: 1px;
  border: 1px solid #7a7a7a;
  background: #fff;

  textarea {
    flex: 1;
    min-width: 0;
    resize: none;
    outline: 0;
    background: #fff;
  }
`;

const SerialScroll = styled.div`
  display: flex;
  flex-direction: column;
  align-items: center;
  justify-content: space-between;
  width: 17px;
  padding: 5px 0;
  background: #f0f0f0;
`;

const Chevron = styled.svg`
  width: 8px;
  height: 8px;
  fill: none;
  stroke: #bbb;
  stroke-width: 2;
`;

const RegisterButton = styled.button`
  grid-column: 2;
  justify-self: end;
  width: 94px;
  height: 21px;
  margin: 16px 1px 20px 0;
  padding-right: 2px;
  border: 2px solid #0078d7;
  line-height: 16px;
  background: #e1e1e1;
`;

const MailLabel = styled.span`
  padding-left: 5px;
  line-height: 20px;
`;

const Mail = styled.a`
  font-family: "Liberation Serif", serif;
  font-size: 15px;
  font-weight: 700;
  line-height: 20px;
  color: #00f;
`;

const Mosaic = styled.div`
  position: absolute;
  top: 173px;
  left: 308px;
  display: flex;
  height: 16px;

  i {
    width: 15px;
    background: #cbcbcb;
  }

  i:nth-child(3) {
    background: #c4c4c4;
  }

  i:nth-child(4) {
    background: #d6d6d6;
  }
`;

const Message = styled.section`
  position: absolute;
  top: 381px;
  left: 565px;
  display: flex;
  flex-direction: column;
  width: 202px;
  height: 174px;
  border: 1px solid #a0a0a0;
  background: #fff;
`;

const MessageTitle = styled.header`
  display: flex;
  align-items: center;
  justify-content: space-between;
  height: 24px;
  padding: 0 10px 0 4px;
  color: #999;
`;

const MessageBody = styled.div`
  flex: 1;
  display: flex;
  align-items: center;
  gap: 9px;
  padding: 0 0 1px 26px;
`;

const MessageFooter = styled.footer`
  display: flex;
  justify-content: flex-end;
  height: 55px;
  padding: 13px 20px;
  background: #f0f0f0;
`;

const OkButton = styled.button`
  width: 86px;
  height: 28px;
  border: 1px solid #adadad;
  background: #e1e1e1;
`;

const Smudge = styled.span`
  position: absolute;
  top: ${(p) => p.$top - 1}px;
  left: 554px;
  width: ${(p) => (p.$cut ? 15 : p.$size)}px;
  height: ${(p) => p.$size}px;
  border-radius: ${(p) => (p.$cut ? "10px 0 0 10px" : "50%")};
  background: #dedede;
`;
